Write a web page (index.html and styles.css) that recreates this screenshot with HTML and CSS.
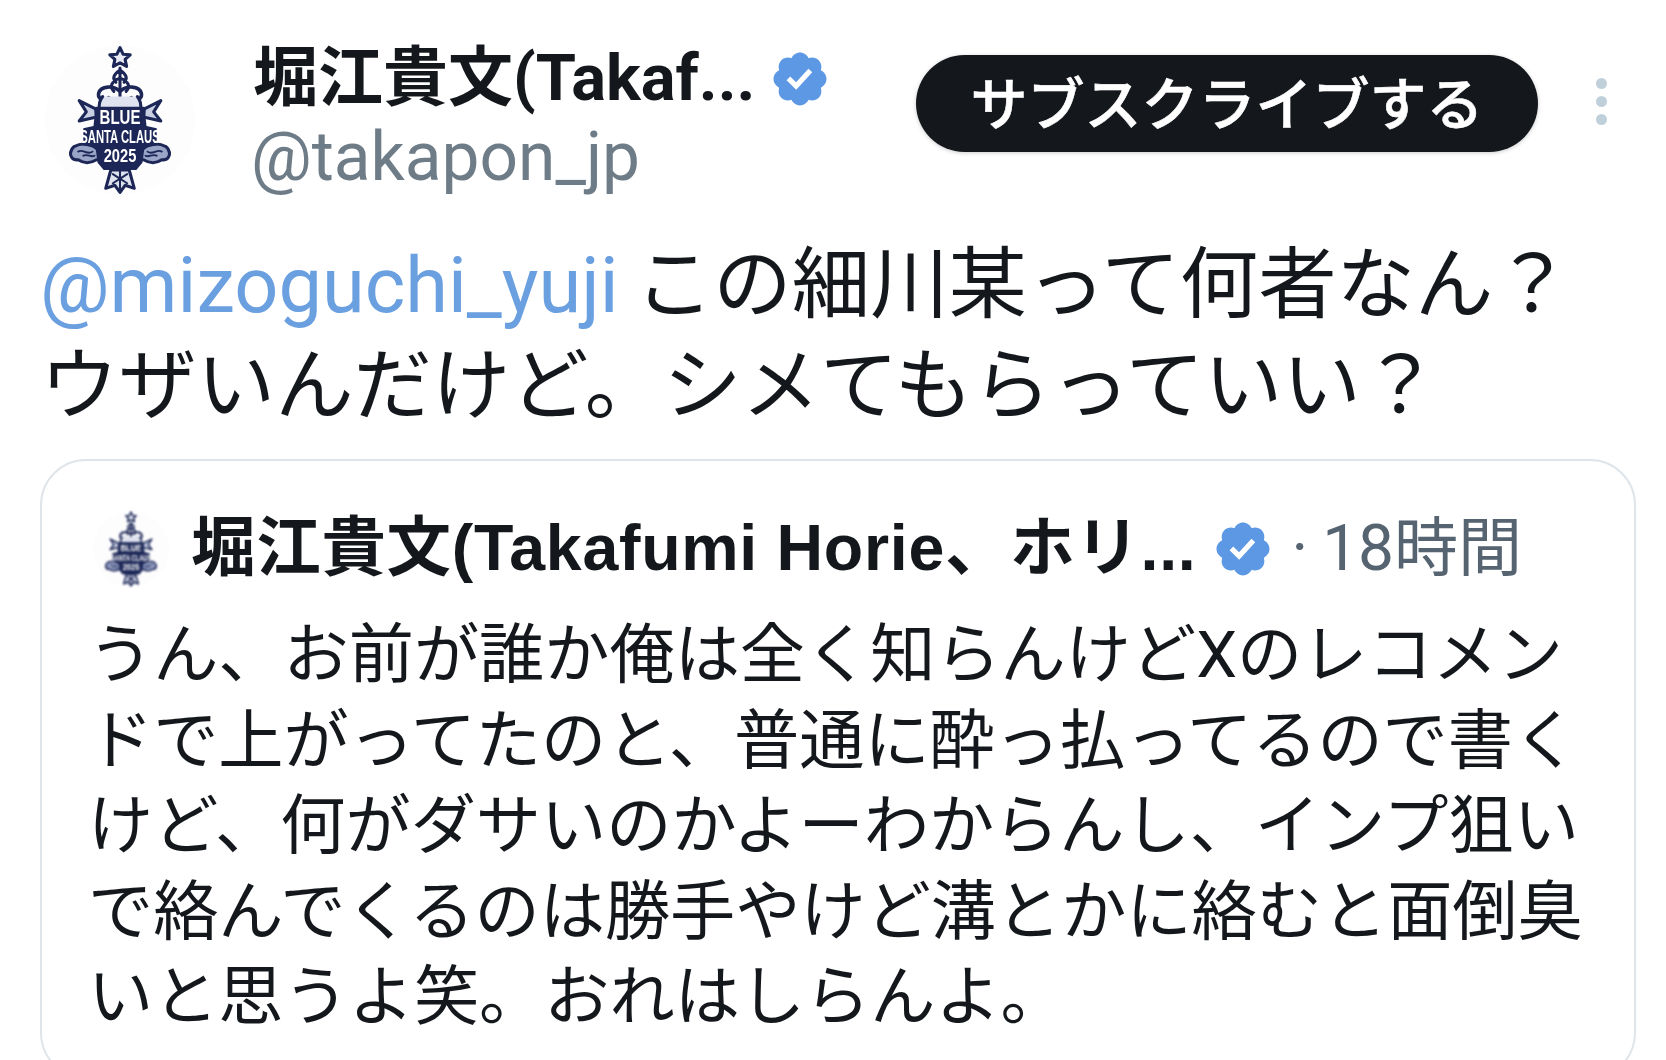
FILE: index.html
```html
<!DOCTYPE html>
<html lang="ja">
<head>
<meta charset="utf-8">
<title>堀江貴文 post</title>
<link rel="stylesheet" href="styles.css">
</head>
<body>
<svg class="defs" width="0" height="0" aria-hidden="true">
  <defs>
    <symbol id="tree" viewBox="0 0 100 146">
      <g fill="none" stroke="#1c2757" stroke-width="3" stroke-linejoin="round" stroke-linecap="round">
        <path d="M50 2l3 6.500 7 .6-5 4.500 1.500 6.900L50 17l-6.500 3.500 1.500-6.900-5-4.500 7-.6z" fill="#e9ecf5"/>
        <path d="M50 22v30M50 24c-6 4-8 8-4 12M50 24c6 4 8 8 4 12M50 32c-8 3-11 8-6 13M50 32c8 3 11 8 6 13"/>
        <path d="M50 45c-6-6-19-6-21 2-1 6 7 8 10 4M50 45c6-6 19-6 21 2 1 6-7 8-10 4" stroke-width="3.500"/>
        <path d="M33 50c-3 4-4 8-3 12h40c1-4 0-8-3-12" fill="#dfe3ef"/>
        <path d="M26 62L10 54l7 11-7 9 17-4zM74 62l16-8-7 11 7 9-17-4z" fill="#c8cfe3"/>
        <path d="M5 99c-6 5-4 14 4 13 6 4 13 3 18 0h46c5 3 12 4 18 0 8 1 10-8 4-13-8-4-15-3-22 2H27c-7-5-14-6-22-2z" fill="#9aa4c6"/>
        <path d="M9 104c5-3 9 4 14 0M14 108c5-2 7 2 11 0M91 104c-5-3-9 4-14 0M86 108c-5-2-7 2-11 0" stroke-width="1.800"/>
        <path d="M41 122l-5 18 9-3 5 7 5-7 9 3-5-18z" fill="#dfe3ef"/>
        <path d="M50 122v20M43 126l14 9M57 126l-14 9" stroke-width="2"/>
      </g>
      <path d="M26 60h48l2 19 10 2v17l-12 2-2 15-6 7H34l-6-7-2-15-12-2V81l10-2z" fill="#1c2757"/>
      <g class="tree-text" text-anchor="middle" fill="#fff">
        <text x="50" y="77" font-size="19" textLength="40" lengthAdjust="spacingAndGlyphs">BLUE</text>
        <text x="50" y="96" font-size="18" textLength="78" lengthAdjust="spacingAndGlyphs">SANTA CLAUS</text>
        <text x="50" y="114" font-size="18" textLength="32" lengthAdjust="spacingAndGlyphs">2025</text>
      </g>
    </symbol>
    <symbol id="badge" viewBox="0 0 24 24">
      <path d="M22.250 12c0-1.430-.880-2.670-2.190-3.340.460-1.390.200-2.900-.810-3.910s-2.520-1.270-3.910-.810c-.660-1.310-1.910-2.190-3.340-2.190s-2.670.880-3.330 2.190c-1.400-.460-2.910-.200-3.920.810s-1.260 2.520-.800 3.910c-1.310.670-2.200 1.910-2.200 3.340s.890 2.670 2.200 3.340c-.460 1.390-.210 2.900.800 3.910s2.520 1.260 3.910.810c.670 1.310 1.910 2.190 3.340 2.190s2.680-.880 3.340-2.190c1.390.450 2.900.200 3.910-.810s1.270-2.520.810-3.910c1.310-.670 2.190-1.910 2.190-3.340zm-11.710 4.200L6.800 12.460l1.410-1.420 2.260 2.260 4.800-5.230 1.470 1.360-6.200 6.770z"/>
    </symbol>
  </defs>
</svg>

<article class="tweet">
  <header class="head">
    <div class="avatar"><svg class="tree"><use href="#tree"/></svg></div>
    <div class="who">
      <div class="name-row">
        <span class="name">堀江貴文(Takaf...</span>
        <svg class="badge"><use href="#badge"/></svg>
      </div>
      <div class="handle">@takapon_jp</div>
    </div>
    <button class="subscribe" type="button">サブスクライブする</button>
    <div class="more" aria-label="more"><i></i><i></i><i></i></div>
  </header>

  <p class="body"><a class="mention">@mizoguchi_yuji</a> この細川某って何者なん？<br>ウザいんだけど。シメてもらっていい？</p>

  <section class="quote">
    <div class="quote-head">
      <div class="avatar-small"><svg class="tree"><use href="#tree"/></svg></div>
      <span class="quote-name">堀江貴文(Takafumi Horie、ホリ...</span>
      <svg class="badge badge-small"><use href="#badge"/></svg>
      <span class="time"><span class="dot">·</span>18時間</span>
    </div>
    <p class="quote-body">うん、お前が誰か俺は全く知らんけどXのレコメン<br>ドで上がってたのと、普通に酔っ払ってるので書く<br>けど、何がダサいのかよーわからんし、インプ狙い<br>で絡んでくるのは勝手やけど溝とかに絡むと面倒臭<br>いと思うよ笑。おれはしらんよ。</p>
  </section>
</article>
</body>
</html>
```
FILE: styles.css
```css
* { box-sizing: border-box; }
html, body { margin: 0; height: 1060px; overflow: hidden; background: #fff; }
body {
  font-family: Roboto, "Noto Sans CJK JP", sans-serif;
  color: #14171b;
}
.defs { position: absolute; }
.tweet { padding-top: 45px; }

.head {
  display: flex;
  align-items: flex-start;
  padding-left: 45px;
}
.avatar {
  flex: none;
  width: 150px;
  height: 150px;
  border-radius: 50%;
  background: #fdfdfe;
  display: flex;
  align-items: center;
  justify-content: center;
}
.avatar .tree { width: 102px; height: 150px; filter: blur(.5px); }
.tree-text { font-family: "Liberation Sans", sans-serif; font-weight: 700; }
.who { margin-left: 58px; flex: none; width: 600px; }
.name-row { display: flex; align-items: center; height: 67px; }
.name { font-size: 65px; line-height: 67px; font-weight: 700; white-space: nowrap; }
.badge { fill: #5c98e4; width: 62px; height: 62px; flex: none; margin-left: 14px; }
.handle { font-size: 67.600px; line-height: 74px; color: #6e7c88; margin-top: 8px; margin-left: -2px; }

.subscribe {
  flex: none;
  margin: 10px 0 0 auto;
  width: 622px;
  height: 97px;
  border: 0;
  padding: 4px 0 0;
  border-radius: 49px;
  background: #14171b;
  color: #fff;
  font: 500 57px/93px Roboto, "Noto Sans CJK JP", sans-serif;
  -webkit-text-stroke: .6px #fff;
  box-shadow: 0 1px 4px rgba(0, 0, 0, .2);
}
.more {
  flex: none;
  display: flex;
  flex-direction: column;
  gap: 7px;
  margin: 33px 59px 0 58px;
}
.more i { display: block; width: 11px; height: 11px; border-radius: 50%; background: #c0d0da; }

.body {
  margin: 40px 0 0 40px;
  font-size: 78.400px;
  line-height: 100px;
  white-space: nowrap;
}
.mention { color: #6a9fe0; font-size: 77.500px; margin-right: -3px; }

.quote {
  margin: 23px 30px 0 40px;
  border: 2px solid #e0e5ea;
  border-radius: 46px;
  padding: 50px 0 40px 46px;
  height: 620px;
}
.quote-head { display: flex; align-items: center; height: 75px; }
.avatar-small {
  flex: none;
  width: 76px;
  height: 76px;
  margin-left: 5px;
  border-radius: 50%;
  background: #fdfdfe;
  display: flex;
  align-items: center;
  justify-content: center;
}
.avatar-small .tree { width: 52px; height: 76px; filter: blur(.8px); }
.quote-name {
  margin-left: 22px;
  font-family: "Liberation Sans", "Noto Sans CJK JP", sans-serif;
  font-size: 64.500px;
  font-weight: 700;
  letter-spacing: .7px;
  white-space: nowrap;
  line-height: 75px;
}
.badge-small { width: 62px; height: 62px; margin-left: 16px; }
.time { font-size: 64px; color: #566370; white-space: nowrap; margin-left: 17px; line-height: 75px; }
.dot { margin-right: 14px; }
.quote-body {
  margin: 27px 0 0;
  font-size: 65.200px;
  line-height: 85.500px;
  white-space: nowrap;
}
```
